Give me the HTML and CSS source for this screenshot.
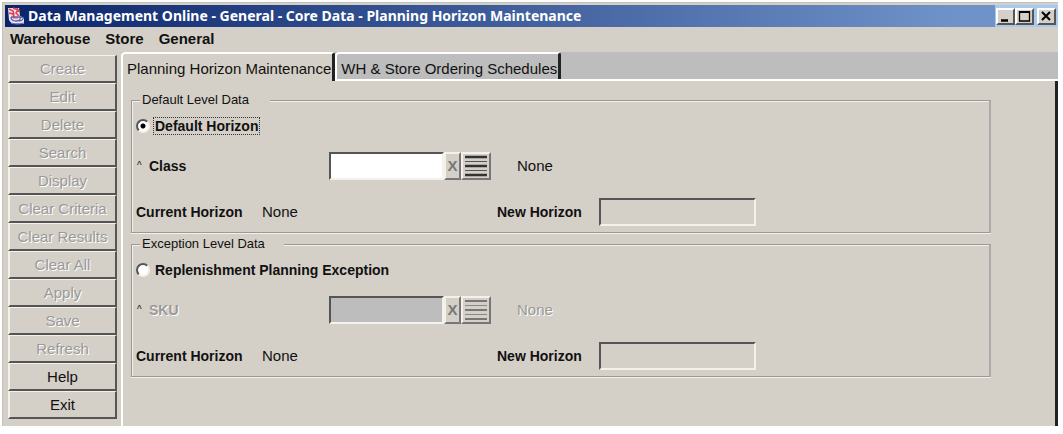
FILE: index.html
```html
<!DOCTYPE html>
<html lang="en">
<head>
<meta charset="utf-8">
<title>Data Management Online</title>
<link rel="stylesheet" href="styles.css">
</head>
<body>
<div class="window">
  <header class="titlebar">
    <svg class="cup" viewBox="0 0 18 18" aria-hidden="true">
      <path d="M1 1h11l1 8 4 2v6H5l-3-4z" fill="#f0e4ee"/>
      <path d="M2 2l4 2 1 4M6 1l5 2-2 3 3 3M2 6l4 1 1 3M10 1l2 4" fill="none" stroke="#e0404e" stroke-width="1.600"/>
      <path d="M4 10h9q1 4-4 4t-5-4M13 10q4 0 3 2t-4 2M4 16q6 2 13 0" fill="none" stroke="#5a62ac" stroke-width="1.300"/>
      <path d="M6 11h5" stroke="#e0404e"/>
    </svg>
    <h1 class="title">Data Management Online - General - Core Data - Planning Horizon Maintenance</h1>
    <div class="controls">
      <button class="control" aria-label="Minimize"><svg viewBox="0 0 15 13"><path d="M3 10.500h7" stroke="#000" stroke-width="2.500"/></svg></button>
      <button class="control" aria-label="Maximize"><svg viewBox="0 0 15 13"><path d="M2.500 1v10h10V1" fill="none" stroke="#000" stroke-width="1.300"/><path d="M2 2h11" stroke="#000" stroke-width="2"/></svg></button>
      <button class="control close" aria-label="Close"><svg viewBox="0 0 15 13"><path d="M3 2l8 8M11 2l-8 8" stroke="#000" stroke-width="2"/></svg></button>
    </div>
  </header>
  <nav class="menu">
    <button class="menu-item">Warehouse</button>
    <button class="menu-item">Store</button>
    <button class="menu-item">General</button>
  </nav>
  <div class="body">
    <aside class="sidebar">
      <button class="action" disabled>Create</button>
      <button class="action" disabled>Edit</button>
      <button class="action" disabled>Delete</button>
      <button class="action" disabled>Search</button>
      <button class="action" disabled>Display</button>
      <button class="action" disabled>Clear Criteria</button>
      <button class="action" disabled>Clear Results</button>
      <button class="action" disabled>Clear All</button>
      <button class="action" disabled>Apply</button>
      <button class="action" disabled>Save</button>
      <button class="action" disabled>Refresh</button>
      <button class="action">Help</button>
      <button class="action">Exit</button>
    </aside>
    <main class="main">
      <div class="tabs" role="tablist">
        <button class="tab active" role="tab" aria-selected="true">Planning Horizon Maintenance</button>
        <button class="tab" role="tab" aria-selected="false">WH &amp; Store Ordering Schedules</button>
      </div>
      <form class="panel">
        <section class="group" aria-labelledby="default-title">
          <div class="group-head"><h2 class="group-title" id="default-title">Default Level Data</h2></div>
          <div class="group-body">
            <div class="choice">
              <input class="radio" type="radio" name="level" id="default" checked>
              <label class="choice-label focused" for="default">Default Horizon</label>
            </div>
            <div class="row lookup-row">
              <span class="mark">^</span>
              <label class="name" for="class">Class</label>
              <input class="field lookup" id="class" type="text">
              <button class="clear" type="button">X</button>
              <button class="list" type="button" aria-label="List classes"><svg viewBox="0 0 26 24"><path d="M2 3h22M2 12h22M2 21h22" stroke="#333" stroke-width="2.500"/><path d="M2 7.500h22M2 16.500h22" stroke="#555" stroke-width="1"/></svg></button>
              <span class="value">None</span>
            </div>
            <div class="row horizon-row">
              <span class="current">Current Horizon</span>
              <span class="current-value">None</span>
              <label class="new" for="new-default">New Horizon</label>
              <input class="field horizon" id="new-default" type="text" readonly>
            </div>
          </div>
        </section>
        <section class="group" aria-labelledby="exception-title">
          <div class="group-head"><h2 class="group-title wide" id="exception-title">Exception Level Data</h2></div>
          <div class="group-body">
            <div class="choice">
              <input class="radio" type="radio" name="level" id="exception">
              <label class="choice-label" for="exception">Replenishment Planning Exception</label>
            </div>
            <div class="row lookup-row">
              <span class="mark">^</span>
              <label class="name off" for="sku">SKU</label>
              <input class="field lookup" id="sku" type="text" disabled>
              <button class="clear" type="button" disabled>X</button>
              <button class="list" type="button" aria-label="List SKUs" disabled><svg viewBox="0 0 26 24"><path d="M2 3h22M2 12h22M2 21h22" stroke="#777" stroke-width="2"/><path d="M2 7.500h22M2 16.500h22" stroke="#888" stroke-width="1"/></svg></button>
              <span class="value off">None</span>
            </div>
            <div class="row horizon-row">
              <span class="current">Current Horizon</span>
              <span class="current-value">None</span>
              <label class="new" for="new-exception">New Horizon</label>
              <input class="field horizon" id="new-exception" type="text" readonly>
            </div>
          </div>
        </section>
      </form>
    </main>
  </div>
</div>
</body>
</html>
```
FILE: styles.css
```css
* { box-sizing: border-box; }
body {
  margin: 0;
  padding: 2px 5px 8px 2px;
  background: #fff;
  color: #111;
  font: 15px/18px "Liberation Sans", Arial, sans-serif;
}
button, input { font: inherit; color: inherit; margin: 0; }
.window {
  background: #d4cfc7;
  border-top: 1px solid #c4c0b8;
  border-left: 1px solid #c4c0b8;
  padding: 2px 0 0 2px;
}
.titlebar {
  display: flex;
  align-items: center;
  height: 22px;
  padding-left: 2px;
  background: linear-gradient(to right, #0a246a, #6f92c8 90%);
}
.cup { width: 18px; height: 18px; flex: none; }
.title {
  flex: 1;
  margin: 0 0 0 3px;
  color: #fff;
  font: bold 14px/20px "Noto Sans", Tahoma, sans-serif;
  white-space: nowrap;
}
.controls {
  display: flex;
  align-items: center;
  height: 22px;
  padding: 0 2px 0 1px;
  background: #a6caf0;
}
.control {
  width: 19px;
  height: 17px;
  padding: 0;
  background: #d4cfc7;
  border: 2px solid;
  border-color: #fff #555 #555 #fff;
}
.control svg { display: block; width: 15px; height: 13px; }
.close { margin-left: 3px; }
.menu { display: flex; gap: 15px; height: 25px; padding: 2px 0 0 5px; }
.menu-item { height: 20px; padding: 0; border: 0; background: none; font-weight: bold; font-size: 15px; line-height: 18px; }
.body { display: flex; gap: 4px; }
.sidebar { display: flex; flex-direction: column; width: 112px; padding: 3px 0 7px 3px; }
.action {
  height: 28px;
  padding: 0;
  background: none;
  border: 2px solid;
  border-color: #f4f1eb #555 #555 #f4f1eb;
  border-top-width: 1px;
}
.action:disabled { color: #999; text-shadow: 1px 1px #fff; }
.main { flex: 1; display: flex; flex-direction: column; }
.tabs { display: flex; height: 29px; background: #bdbdbd; border-bottom: 2px solid #fff; }
.tab {
  height: 27px;
  padding: 4px 1px 0 4px;
  background: #bdbdbd;
  border: 0 solid;
  border-width: 2px 3px 0 2px;
  border-color: #fff #222 #fff #fff;
  border-radius: 4px 3px 0 0;
  white-space: nowrap;
}
.active { height: 29px; padding-bottom: 2px; background: #d4cfc7; }
.panel {
  flex: 1;
  display: flex;
  flex-direction: column;
  gap: 2px;
  padding: 10px 64px 0 8px;
  border-left: 2px solid #fff;
  border-right: 3px solid #222;
}
.group-head { display: flex; height: 18px; }
.group-head::before {
  content: "";
  width: 8px;
  height: 9px;
  margin-top: 9px;
  border-top: 1px solid #999;
  border-left: 1px solid #999;
  box-shadow: inset 1px 1px #f4f1eb;
}
.group-head::after {
  content: "";
  flex: 1;
  height: 9px;
  margin-top: 9px;
  border-top: 1px solid #999;
  border-right: 2px solid #aaa;
  box-shadow: inset 0 1px #f4f1eb;
}
.group-title { width: 130px; margin: 0; padding-left: 2px; font-size: 13px; line-height: 18px; font-weight: normal; }
.wide { width: 144px; }
.group-body {
  height: 124px;
  padding: 7px 4px 0;
  border: 1px solid #999;
  border-top: 0;
  border-right: 2px solid #aaa;
  box-shadow: 0 1px #f4f1eb, inset 1px 0 #f4f1eb;
}
.choice { display: flex; align-items: center; gap: 3px; height: 20px; }
.radio {
  appearance: none;
  width: 14px;
  height: 14px;
  border: 2px solid;
  border-color: #555 #f4f1eb #f4f1eb #555;
  border-radius: 50%;
  background: #fff;
}
.radio:checked { background: radial-gradient(circle, #000 0 2px, #fff 3px); }
.choice-label { padding: 0 1px; border: 1px solid transparent; font-size: 14px; line-height: 16px; font-weight: bold; }
.focused { border: 1px dotted #333; }
.row { display: flex; align-items: center; height: 30px; }
.lookup-row { margin-top: 15px; }
.horizon-row { margin-top: 16px; }
.mark { width: 13px; padding-left: 1px; font-size: 10px; }
.name { width: 180px; font-size: 14px; font-weight: bold; }
.field { border: 2px solid; border-color: #555 #f4f1eb #f4f1eb #555; border-radius: 0; padding: 0 4px; background: #fff; }
.lookup { width: 115px; height: 28px; }
.lookup:disabled { background: #bdbdbd; }
.clear, .list { height: 28px; padding: 0; background: #d4cfc7; border: 2px solid; border-color: #f4f1eb #777 #777 #f4f1eb; }
.clear { width: 17px; color: #777; font-weight: bold; }
.list { width: 30px; }
.list svg { display: block; width: 26px; height: 24px; }
.value { margin-left: 26px; }
.current { width: 126px; font-size: 14px; font-weight: bold; }
.current-value { width: 235px; }
.new { width: 102px; font-size: 14px; font-weight: bold; }
.horizon { width: 157px; height: 28px; background: #d4cfc7; }
.off { color: #999; text-shadow: 1px 1px #fff; }
```
